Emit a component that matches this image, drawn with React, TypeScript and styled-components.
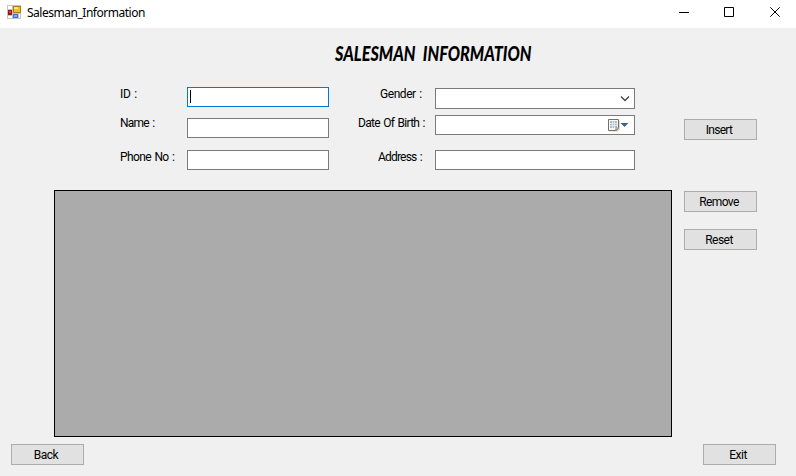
import React from 'react';
import styled, { createGlobalStyle } from 'styled-components';

const GlobalStyle = createGlobalStyle`
  body { margin: 0; overflow: hidden; background: #f0f0f0; }
  * { box-sizing: border-box; }
`;

const Window = styled.main`
  display: flex;
  flex-direction: column;
  width: 796px;
  height: 476px;
  background: #f0f0f0;
  color: #000;
  font: 12px/14px Roboto, 'Liberation Sans', sans-serif;
`;

const TitleBar = styled.header`
  display: flex;
  height: 28px;
  flex: none;
  background: #fff;
  padding-left: 7px;
`;

const AppIcon = styled.svg`
  width: 14px;
  height: 14px;
  margin-top: 5px;
  flex: none;
`;

const Caption = styled.span`
  margin-left: 6px;
  padding-top: 5px;
  flex: 1;
  font: 12px/16px 'Noto Sans', sans-serif;
  letter-spacing: -0.48px;
`;

const WindowControls = styled.div`
  display: flex;
  width: 136px;
  height: 28px;
`;

const Heading = styled.h1`
  margin: 11px 0 1px 335px;
  width: 280px;
  height: 28px;
  font: italic 900 21px/28px Lato, sans-serif;
  white-space: nowrap;
  word-spacing: 5px;
  transform: scaleX(0.772);
  transform-origin: left center;
`;

const Workspace = styled.div`
  display: flex;
  height: 376px;
  padding-top: 19px;
`;

const Main = styled.section`
  width: 618px;
  margin-left: 54px;
`;

const Form = styled.form`
  display: flex;
  height: 103px;
`;

const FieldColumn = styled.div<{ $start: number }>`
  padding-left: ${p => p.$start}px;
`;

const Field = styled.div<{ $gap?: number }>`
  display: flex;
  align-items: flex-start;
  margin-top: ${p => p.$gap ?? 0}px;
`;

const Label = styled.label<{ $width: number; $indent?: number; $top: number; $tracking?: number }>`
  width: ${p => p.$width}px;
  flex: none;
  padding-left: ${p => p.$indent ?? 0}px;
  margin-top: ${p => p.$top}px;
  height: 14px;
  white-space: nowrap;
  word-spacing: 1px;
  letter-spacing: ${p => p.$tracking ?? -0.6}px;
`;

const Box = styled.div<{ $width: number; $height?: number; $focus?: boolean }>`
  display: flex;
  width: ${p => p.$width}px;
  height: ${p => p.$height ?? 20}px;
  border: 1px solid ${p => (p.$focus ? '#0078d7' : '#7a7a7a')};
  background: #fff;
  justify-content: ${p => (p.$focus ? 'flex-start' : 'flex-end')};
`;

const Caret = styled.span`
  width: 1px;
  height: 13px;
  margin: 2px 0 0 2px;
  background: #000;
`;

const DataGrid = styled.div`
  height: 247px;
  border: 1px solid #000;
  background: #ababab;
`;

const Actions = styled.aside`
  display: flex;
  flex-direction: column;
  margin-left: 12px;
  padding-top: 32px;
`;

const Button = styled.button<{ $gap?: number; $tracking?: number }>`
  width: 73px;
  height: 21px;
  margin: ${p => p.$gap ?? 0}px 0 0;
  padding: 1px 3px 0 0;
  border: 1px solid #adadad;
  background: #e1e1e1;
  color: #000;
  font: 12px/14px Roboto, 'Liberation Sans', sans-serif;
  letter-spacing: ${p => p.$tracking ?? -0.5}px;
`;

const Footer = styled.footer`
  display: flex;
  justify-content: space-between;
  padding: 0 20px 0 11px;
`;

export default function App() {
  return (
    <>
      <GlobalStyle />
      <Window>
        <TitleBar>
          <AppIcon viewBox="0 0 14 14" shapeRendering="crispEdges">
            <path fill="#c4c4c4" d="M0 0h14v14H0z" />
            <path fill="#fff" d="M1 1h4v3H1zM1 11h4v2H1zM12 9h1v4h-1z" />
            <path fill="#941515" d="M1 5h4v5H1z" />
            <path fill="#df4444" d="M2 6h2v2H2z" />
            <path fill="#b57b05" d="M6 1h8v7H6z" />
            <path fill="#f3bd2a" d="M7 2h6v5H7z" />
            <path fill="#ffe483" d="M7 2h4v2H7z" />
            <path fill="#3f70cf" d="M6 9h5v4H6z" />
            <path fill="#7aabff" d="M7 10h3v2H7z" />
          </AppIcon>
          <Caption>Salesman_Information</Caption>
          <WindowControls>
            <svg width="136" height="28" fill="none" stroke="#000">
              <path d="M19 12.5h10M64.5 7.5h9v9h-9z" />
              <path d="m110.3 7.3 9.4 9.4m0-9.4-9.4 9.4" />
            </svg>
          </WindowControls>
        </TitleBar>
        <Heading>SALESMAN INFORMATION</Heading>
        <Workspace>
          <Main>
            <Form>
              <FieldColumn $start={66}>
                <Field>
                  <Label $width={67} $top={0} $tracking={-0.3}>ID :</Label>
                  <Box $width={142} $focus><Caret /></Box>
                </Field>
                <Field $gap={11}>
                  <Label $width={67} $top={-2} $tracking={-0.75}>Name :</Label>
                  <Box $width={142} />
                </Field>
                <Field $gap={12}>
                  <Label $width={67} $top={0}>Phone No :</Label>
                  <Box $width={142} />
                </Field>
              </FieldColumn>
              <FieldColumn $start={29}>
                <Field $gap={1}>
                  <Label $width={77} $indent={22} $top={-1} $tracking={-0.45}>Gender :</Label>
                  <Box $width={200} $height={21}>
                    <svg width="18" height="19" fill="none" stroke="#444" strokeWidth="1.3">
                      <path d="m5 7.5 4 4 4-4" />
                    </svg>
                  </Box>
                </Field>
                <Field $gap={6}>
                  <Label $width={77} $top={1} $tracking={-0.7}>Date Of Birth :</Label>
                  <Box $width={200}>
                    <svg width="30" height="18">
                      <path d="M5 4.5h11v9l-2 2H5z" fill="#ddd9d6" />
                      <path d="M4.5 3.5h10v8l-2 3h-8z" fill="#f4f6f8" stroke="#776d69" />
                      <path d="M6 5h7v7H6z" fill="#aebdca" />
                      <path d="M8.5 5v7m2-7v7M6 7.5h7m-7 2h7" stroke="#e8edf2" strokeWidth=".8" />
                      <path d="M11.5 14.5 12 12h2.5z" fill="#fff" stroke="#776d69" strokeWidth=".7" />
                      <path d="M16.5 7h8l-4 4z" fill="#405f8e" />
                    </svg>
                  </Box>
                </Field>
                <Field $gap={15}>
                  <Label $width={77} $indent={20} $top={0} $tracking={-0.8}>Address :</Label>
                  <Box $width={200} />
                </Field>
              </FieldColumn>
            </Form>
            <DataGrid />
          </Main>
          <Actions>
            <Button $tracking={-0.7}>Insert</Button>
            <Button $gap={51} $tracking={-0.6}>Remove</Button>
            <Button $gap={17}>Reset</Button>
          </Actions>
        </Workspace>
        <Footer>
          <Button>Back</Button>
          <Button>Exit</Button>
        </Footer>
      </Window>
    </>
  );
}
